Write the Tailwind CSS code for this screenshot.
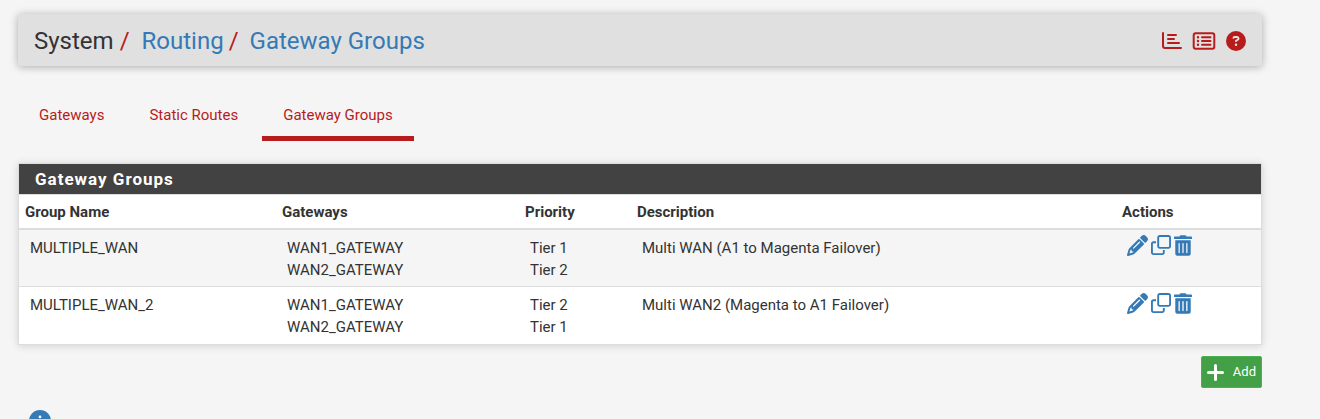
<!DOCTYPE html>
<html lang="en">
<head>
<meta charset="utf-8">
<title>System / Routing / Gateway Groups</title>
<script src="https://cdn.jsdelivr.net/npm/@tailwindcss/browser@4"></script>
</head>
<body class="bg-[#f5f5f5] font-['Roboto',sans-serif] text-[15px] leading-[22px] text-[#333] overflow-hidden">
<svg class="hidden" aria-hidden="true">
  <symbol id="pencil" viewBox="0 0 512 512"><path d="M410.3 231l11.3-11.3-33.9-33.9-62.1-62.1L291.7 89.8l-11.3 11.3-22.6 22.6L58.6 322.9c-10.4 10.4-18 23.3-22.2 37.4L1 480.7c-2.5 8.4-.2 17.5 6.1 23.7s15.3 8.5 23.7 6.1l120.3-35.4c14.1-4.2 27-11.8 37.4-22.2L387.7 253.7 410.3 231zM160 399.4l-9.1 22.7c-4 3.1-8.5 5.4-13.3 6.9L59.4 452l23-78.1c1.4-4.9 3.8-9.4 6.9-13.3l22.7-9.1v32c0 8.8 7.2 16 16 16h32zM362.7 18.7L348.3 33.2 325.7 55.8 314.3 67.1l33.9 33.9 62.1 62.1 33.9 33.9 11.3-11.3 22.6-22.6 14.5-14.5c25-25 25-65.5 0-90.5L453.3 18.7c-25-25-65.5-25-90.5 0zm-47.4 168l-144 144c-6.2 6.2-16.4 6.2-22.6 0s-6.2-16.4 0-22.6l144-144c6.2-6.2 16.4-6.2 22.6 0s6.2 16.4 0 22.6z"/></symbol>
  <symbol id="clone" viewBox="0 0 512 512"><path d="M64 464H288c8.8 0 16-7.2 16-16V384h48v64c0 35.3-28.7 64-64 64H64c-35.3 0-64-28.7-64-64V224c0-35.3 28.7-64 64-64h64v48H64c-8.8 0-16 7.2-16 16V448c0 8.8 7.2 16 16 16zM224 304H448c8.8 0 16-7.2 16-16V64c0-8.8-7.2-16-16-16H224c-8.8 0-16 7.2-16 16V288c0 8.8 7.2 16 16 16zm-64-16V64c0-35.3 28.7-64 64-64H448c35.3 0 64 28.7 64 64V288c0 35.3-28.7 64-64 64H224c-35.3 0-64-28.7-64-64z"/></symbol>
  <symbol id="trash" viewBox="0 0 448 512"><path d="M32 464a48 48 0 0 0 48 48h288a48 48 0 0 0 48-48V128H32zm272-256a16 16 0 0 1 32 0v224a16 16 0 0 1-32 0zm-96 0a16 16 0 0 1 32 0v224a16 16 0 0 1-32 0zm-96 0a16 16 0 0 1 32 0v224a16 16 0 0 1-32 0zM432 32H312l-9.4-18.7A24 24 0 0 0 281.1 0H166.8a23.7 23.7 0 0 0-21.4 13.3L136 32H16A16 16 0 0 0 0 48v32a16 16 0 0 0 16 16h416a16 16 0 0 0 16-16V48a16 16 0 0 0-16-16z"/></symbol>
</svg>
<div class="pl-[18px] pr-[58px] pt-[14px]">
  <header class="flex items-center justify-between h-[52px] px-4 pt-[2px] rounded-[3px] bg-[#e0e0e0] shadow-[0_1px_8px_rgba(0,0,0,0.3)]">
    <nav aria-label="Breadcrumb">
      <ol class="flex items-center text-[24px] leading-8">
        <li>System<span class="px-[6px] text-[#b71c1c]">/</span></li>
        <li class="pl-[6px]"><a href="#" class="text-[#337ab7]">Routing</a><span class="px-[5px] text-[#b71c1c]">/</span></li>
        <li class="pl-[6px]"><a href="#" class="text-[#337ab7]">Gateway Groups</a></li>
      </ol>
    </nav>
    <div class="flex items-center gap-[10px] text-[#b71c1c]">
      <a href="#" aria-label="Status"><svg class="block size-5" viewBox="0 0 20 20" fill="none" stroke="currentColor" stroke-width="2" stroke-linecap="round" stroke-linejoin="round"><path d="M1 2v13q0 2 2 2h16M6 4h8M6 8h6M6 12h11"/></svg></a>
      <a href="#" aria-label="Logs"><svg class="block w-6 h-5" viewBox="0 0 24 20" fill="none" stroke="currentColor" stroke-width="2" stroke-linecap="round"><rect x="1.7" y="2.2" width="20.6" height="15.6" rx="2"/><path d="M10 6.2h8.500M10 10h8.500M10 13.800h8.500"/><path stroke-width="2.400" d="M6 6.200h.010M6 10h.010M6 13.800h.010"/></svg></a>
      <a href="#" aria-label="Help"><svg class="block size-5" viewBox="0 0 512 512" fill="currentColor"><path d="M256 512A256 256 0 1 0 256 0a256 256 0 1 0 0 512zM169.800 165.300c7.900-22.300 29.100-37.300 52.800-37.300h58.300c34.900 0 63.100 28.300 63.100 63.100c0 22.600-12.100 43.500-31.700 54.800L280 264.400c-.2 13-10.900 23.600-24 23.600c-13.300 0-24-10.700-24-24V250.500c0-8.600 4.600-16.500 12.100-20.800l44.300-25.400c4.700-2.700 7.600-7.700 7.600-13.100c0-8.400-6.800-15.100-15.100-15.100H222.600c-3.400 0-6.400 2.100-7.500 5.300l-.4 1.200c-4.400 12.500-18.200 19-30.600 14.600s-19-18.200-14.600-30.600l.3-1.300zM224 352a32 32 0 1 1 64 0 32 32 0 1 1-64 0z"/></svg></a>
    </div>
  </header>

  <nav class="flex gap-[3px] mt-7 text-[#b71c1c]" aria-label="Routing">
    <a href="#" class="px-[21px] py-[10px] border-b-5 border-transparent">Gateways</a>
    <a href="#" class="px-[21px] py-[10px] border-b-5 border-transparent">Static Routes</a>
    <a href="#" class="px-[21px] py-[10px] border-b-5 border-[#b71c1c]" aria-current="page">Gateway Groups</a>
  </nav>

  <section class="mt-[22px] border border-[#ddd] bg-white shadow-[0_1px_8px_rgba(0,0,0,0.15)]">
    <h2 class="h-[30px] pl-4 bg-[#424242] text-white text-[17px] leading-[30px] font-bold tracking-[1px]">Gateway Groups</h2>
    <table class="w-full table-fixed border-t border-[#ddd] text-left">
      <colgroup><col class="w-[257px]"><col class="w-[243px]"><col class="w-[112px]"><col><col class="w-[145px]"></colgroup>
      <thead>
        <tr class="border-b-2 border-[#ddd]">
          <th class="px-[6px] pt-[6px] pb-[5px] font-bold">Group Name</th>
          <th class="px-[6px] pt-[6px] pb-[5px] font-bold">Gateways</th>
          <th class="px-[6px] pt-[6px] pb-[5px] font-bold">Priority</th>
          <th class="px-[6px] pt-[6px] pb-[5px] font-bold">Description</th>
          <th class="px-[6px] pt-[6px] pb-[5px] font-bold">Actions</th>
        </tr>
      </thead>
      <tbody class="align-top">
        <tr class="bg-[#f5f5f5] border-b border-[#ddd]">
          <td class="px-[11px] pt-[7px] pb-[5px]">MULTIPLE_WAN</td>
          <td class="px-[11px] pt-[7px] pb-[5px]">WAN1_GATEWAY<br>WAN2_GATEWAY</td>
          <td class="px-[11px] pt-[7px] pb-[5px]">Tier 1<br>Tier 2</td>
          <td class="px-[11px] pt-[7px] pb-[5px]">Multi WAN (A1 to Magenta Failover)</td>
          <td class="px-[11px] pt-[5px]">
            <div class="flex gap-[3px] text-[#337ab7]">
              <a href="#" aria-label="Edit"><svg class="block size-[21px]" fill="currentColor"><use href="#pencil"/></svg></a>
              <a href="#" aria-label="Copy"><svg class="block size-5" fill="currentColor"><use href="#clone"/></svg></a>
              <a href="#" aria-label="Delete"><svg class="block w-[18px] h-[21px]" fill="currentColor"><use href="#trash"/></svg></a>
            </div>
          </td>
        </tr>
        <tr>
          <td class="px-[11px] pt-[7px] pb-[6px]">MULTIPLE_WAN_2</td>
          <td class="px-[11px] pt-[7px] pb-[6px]">WAN1_GATEWAY<br>WAN2_GATEWAY</td>
          <td class="px-[11px] pt-[7px] pb-[6px]">Tier 2<br>Tier 1</td>
          <td class="px-[11px] pt-[7px] pb-[6px]">Multi WAN2 (Magenta to A1 Failover)</td>
          <td class="px-[11px] pt-[6px]">
            <div class="flex gap-[3px] text-[#337ab7]">
              <a href="#" aria-label="Edit"><svg class="block size-[21px]" fill="currentColor"><use href="#pencil"/></svg></a>
              <a href="#" aria-label="Copy"><svg class="block size-5" fill="currentColor"><use href="#clone"/></svg></a>
              <a href="#" aria-label="Delete"><svg class="block w-[18px] h-[21px]" fill="currentColor"><use href="#trash"/></svg></a>
            </div>
          </td>
        </tr>
      </tbody>
    </table>
  </section>

  <div class="flex justify-end mt-[11px]">
    <a href="#" class="flex items-center gap-[9px] h-8 px-[5px] rounded-[2px] border border-[#4caf50] bg-[#43a047] text-white text-[13px]">
      <svg class="size-[17px]" viewBox="0 0 17 17" fill="none" stroke="currentColor" stroke-width="3" stroke-linecap="round"><path d="M8.500 1.500v14M1.500 8.500h14"/></svg>Add
    </a>
  </div>
  <button type="button" class="block mt-[22px] ml-[11px] text-[#337ab7]" aria-label="Info"><svg class="block size-[22px]" viewBox="0 0 512 512"><circle cx="256" cy="256" r="256" fill="currentColor"/><path fill="#fff" d="M216 336h24V272H216c-13.300 0-24-10.700-24-24s10.700-24 24-24h48c13.300 0 24 10.700 24 24v88h8c13.300 0 24 10.700 24 24s-10.700 24-24 24H216c-13.300 0-24-10.700-24-24s10.700-24 24-24zm40-208a32 32 0 1 1 0 64 32 32 0 1 1 0-64z"/></svg></button>
</div>
</body>
</html>
